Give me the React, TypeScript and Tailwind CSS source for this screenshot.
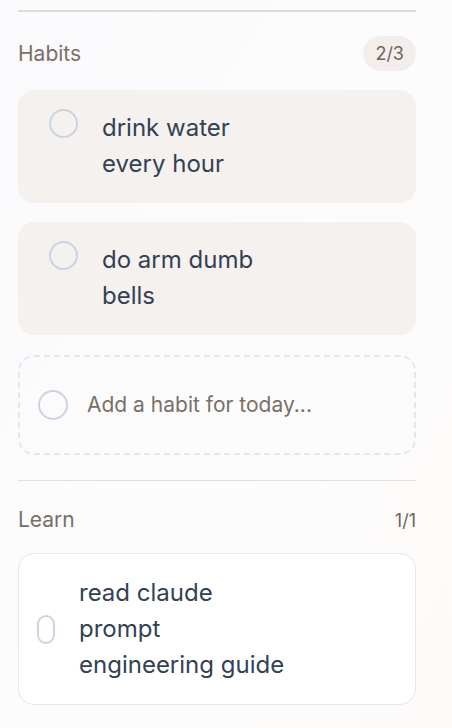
import React from "react";

const habits = [
  { id: 1, title: "drink water every hour" },
  { id: 2, title: "do arm dumb bells" },
];

function Circle({ className }: { className: string }) {
  return <span className={`block shrink-0 rounded-full border-[2.5px] border-[#cbd5e1] ${className}`} />;
}

export default function App() {
  return (
    <div className="min-h-screen bg-gradient-to-br from-[#fafafc] via-[#fcfcfd] to-[#fdfbf9] pl-[18px] pr-[36px] pt-[10px] font-['Inter',sans-serif]">
      <div className="h-[2px] bg-[#e1dbd5]" />

      <div className="mt-[24px] flex h-[35px] items-center justify-between">
        <h2 className="text-[21px] text-[#7b6f65]">Habits</h2>
        <span className="flex h-[35px] items-center rounded-full bg-[#f3eeeb] px-[12px] text-[18px] text-[#6f655c]">
          2/3
        </span>
      </div>

      <div className="mt-[19px] flex flex-col gap-[19px]">
        {habits.map((h) => (
          <div key={h.id} className="flex h-[113px] items-start rounded-2xl bg-[#f5f1ef] pl-[31px] pt-[19px]">
            <Circle className="h-[29px] w-[29px]" />
            <p className="ml-[24px] mt-[1px] w-[175px] text-[24px] leading-[36px] text-[#334155]">{h.title}</p>
          </div>
        ))}
      </div>

      <div className="mt-[20px] flex h-[100px] items-center rounded-2xl border-2 border-dashed border-[#e2e8f0] pl-[18px]">
        <Circle className="h-[30px] w-[30px]" />
        <span className="ml-[19px] text-[21px] text-[#7b6f65]">Add a habit for today...</span>
      </div>

      <div className="mt-[25px] h-px bg-[#e6dfd7]" />

      <div className="mt-[27px] flex h-[24px] items-center justify-between">
        <h2 className="text-[21px] text-[#7b6f65]">Learn</h2>
        <span className="text-[18px] text-[#6f655c]">1/1</span>
      </div>

      <div className="mt-[21px] flex items-center rounded-2xl border border-[#e2e8f0] bg-white py-[21px] pl-[18px]">
        <Circle className="h-[29px] w-[18px]" />
        <p className="ml-[24px] w-[210px] text-[24px] leading-[36px] text-[#334155]">
          read claude prompt engineering guide
        </p>
      </div>
    </div>
  );
}
